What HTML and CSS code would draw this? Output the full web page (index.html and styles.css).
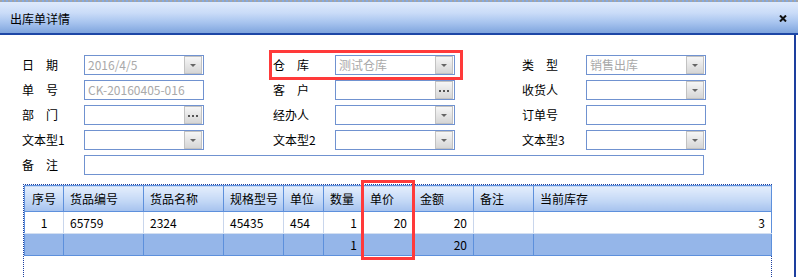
FILE: index.html
```html
<!DOCTYPE html>
<html lang="zh-CN">
<head>
    <meta charset="UTF-8">
    <title>出库单详情</title>
    <link rel="stylesheet" href="styles.css">
</head>
<body>
    <div class="window">
        <div class="titlebar">
            <span class="title">出库单详情</span>
            <svg class="close" width="8" height="7" viewBox="0 0 8 7"><path d="M1 0.5 L7 6.5 M7 0.5 L1 6.5" stroke="#111" stroke-width="2"/></svg>
        </div>
        <div class="content">
            <div class="form">
                <label>日&emsp;期</label>
                <div class="field disabled"><span class="val">2016/4/5</span><span class="btn drop"></span></div>
                <label>仓&emsp;库</label>
                <div class="field disabled"><span class="val">测试仓库</span><span class="btn drop"></span></div>
                <label>类&emsp;型</label>
                <div class="field disabled"><span class="val">销售出库</span><span class="btn drop"></span></div>

                <label>单&emsp;号</label>
                <div class="field disabled"><span class="val">CK-20160405-016</span></div>
                <label>客&emsp;户</label>
                <div class="field"><span class="val"></span><span class="btn more"></span></div>
                <label>收货人</label>
                <div class="field"><span class="val"></span><span class="btn drop"></span></div>

                <label>部&emsp;门</label>
                <div class="field"><span class="val"></span><span class="btn more"></span></div>
                <label>经办人</label>
                <div class="field"><span class="val"></span><span class="btn drop"></span></div>
                <label>订单号</label>
                <div class="field"><span class="val"></span></div>

                <label>文本型1</label>
                <div class="field"><span class="val"></span><span class="btn drop"></span></div>
                <label>文本型2</label>
                <div class="field"><span class="val"></span><span class="btn drop"></span></div>
                <label>文本型3</label>
                <div class="field"><span class="val"></span><span class="btn drop"></span></div>

                <label>备&emsp;注</label>
                <div class="field wide"><span class="val"></span></div>
            </div>

            <div class="grid-box">
                <table class="grid">
                    <colgroup>
                        <col style="width:39px"><col style="width:80px"><col style="width:80px">
                        <col style="width:60px"><col style="width:40px"><col style="width:40px">
                        <col style="width:50px"><col style="width:60px"><col style="width:60px">
                        <col style="width:238px">
                    </colgroup>
                    <thead>
                        <tr>
                            <th class="c">序号</th><th>货品编号</th><th>货品名称</th><th>规格型号</th><th>单位</th>
                            <th>数量</th><th>单价</th><th>金额</th><th>备注</th><th>当前库存</th>
                        </tr>
                    </thead>
                    <tbody>
                        <tr class="row">
                            <td class="c">1</td><td>65759</td><td>2324</td><td>45435</td><td>454</td>
                            <td class="r">1</td><td class="r">20</td><td class="r">20</td><td></td><td class="r">3</td>
                        </tr>
                        <tr class="sum">
                            <td></td><td></td><td></td><td></td><td></td>
                            <td class="r">1</td><td></td><td class="r">20</td><td></td><td></td>
                        </tr>
                    </tbody>
                </table>
            </div>
        </div>
        <div class="mark mark-store"></div>
        <div class="mark mark-price"></div>
    </div>
</body>
</html>
```

FILE: styles.css
```css
body {
    margin: 0;
    padding: 0;
    background-color: white;
    font-family: "Noto Sans CJK SC", sans-serif;
    font-size: 12px;
    color: #000;
    overflow: hidden;
}

.window {
    position: relative;
    width: 798px;
    height: 277px;
}

.titlebar {
    height: 31px;
    border-top: 2px dotted #a4a4a4;
    border-bottom: 2px solid #1d47a6;
    background: linear-gradient(#dfeafc 0%, #cadcf8 35%, #a9c5ef 65%, #7fa5de 100%);
    display: flex;
    align-items: center;
    justify-content: space-between;
    padding: 0 11px 0 10px;
}

.title {
    line-height: 14px;
    margin-top: 2px;
}

.close {
    margin-top: 1px;
}

.content {
    width: 794px;
    height: 242px;
    border-right: 2px solid #1d3f9e;
}

.form {
    display: grid;
    grid-template-columns: 62px 189px 62px 187px 64px 120px;
    grid-auto-rows: 20px;
    row-gap: 5px;
    padding: 20px 0 0 22px;
    align-items: center;
}

.form label {
    line-height: 14px;
    white-space: nowrap;
}

.field {
    width: 120px;
    height: 20px;
    box-sizing: border-box;
    border: 1px solid #7092d0;
    display: flex;
    align-items: stretch;
    background-color: white;
}

.field.wide {
    width: 620px;
    grid-column: 2 / 7;
}

.val {
    flex: 1;
    padding-left: 3px;
    line-height: 18px;
    white-space: nowrap;
    overflow: hidden;
}

.disabled .val {
    color: #a9a9a9;
}

.btn {
    flex: 0 0 18px;
    width: 18px;
    margin-right: 1px;
    box-sizing: border-box;
    border: 1px solid #c2c2c2;
    background: linear-gradient(#f6f6f6, #d6d6d6);
    display: flex;
    align-items: center;
    justify-content: center;
}

.drop::after {
    content: "";
    border-left: 3px solid transparent;
    border-right: 3px solid transparent;
    border-top: 3px solid #666;
}

.more::after {
    content: "";
    width: 2px;
    height: 2px;
    margin-top: 2px;
    background-color: #555;
    box-shadow: -4px 0 0 #555, 4px 0 0 #555;
}

.grid-box {
    margin: 9px 0 0 23px;
    width: 747px;
    height: 100px;
    border: 1px dotted #1c3fa0;
    border-bottom: none;
}

.grid {
    border-collapse: collapse;
    table-layout: fixed;
    width: 747px;
}

.grid th,
.grid td {
    padding: 0 6px;
    text-align: left;
    font-weight: normal;
    white-space: nowrap;
    line-height: 14px;
}

.grid th {
    height: 25px;
    background: linear-gradient(#e4eefc, #c5d9f6 55%, #a5c2ee);
    border: 1px solid #5d90dc;
}

.grid .row td {
    height: 21px;
    background-color: white;
    border-right: 1px solid #c9d6ec;
    border-bottom: 1px solid #d3dff1;
}

.grid .row td:first-child {
    border-left: 1px solid #5d90dc;
}

.grid .row td:last-child {
    border-right: 1px solid #5d90dc;
}

.grid .sum td {
    height: 21px;
    background-color: #95b6e9;
    border: 1px solid #5d90dc;
    border-top: none;
}

.grid .c {
    text-align: center;
}

.grid .r {
    text-align: right;
}

.mark {
    position: absolute;
    border: 3px solid #ff3a3a;
    box-sizing: border-box;
}

.mark-store {
    left: 269px;
    top: 50px;
    width: 194px;
    height: 30px;
}

.mark-price {
    left: 361px;
    top: 180px;
    width: 54px;
    height: 80px;
}
```
